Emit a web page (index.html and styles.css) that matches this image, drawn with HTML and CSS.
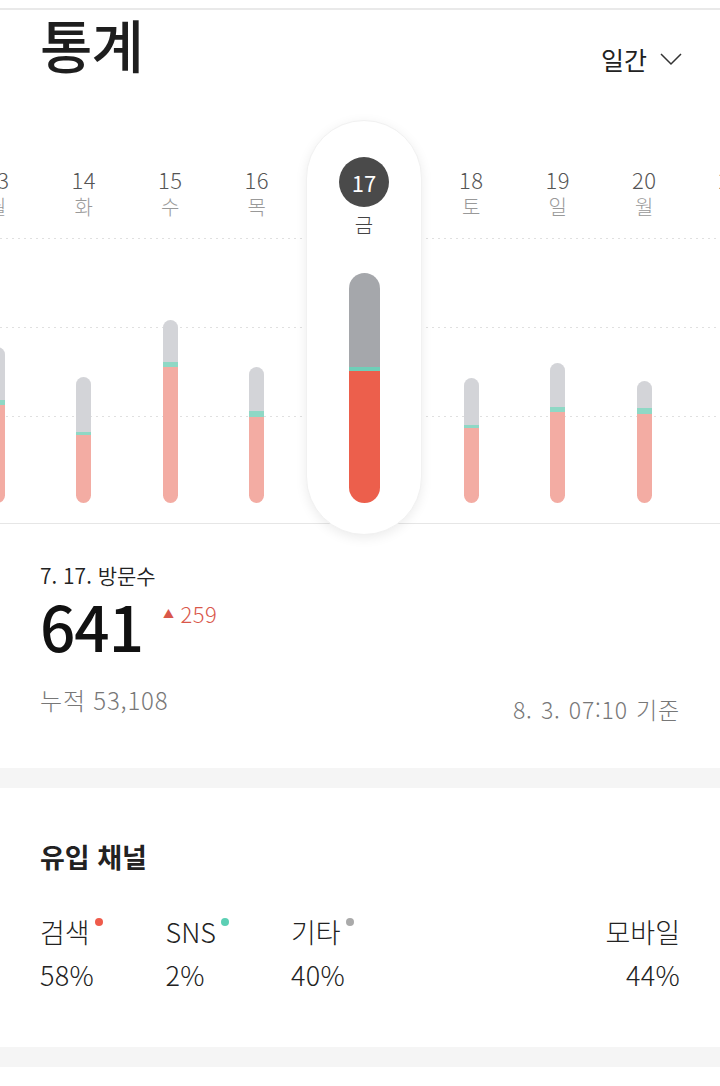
FILE: index.html
```html
<!DOCTYPE html>
<html lang="ko">
<head>
<meta charset="utf-8">
<title>통계</title>
<link rel="stylesheet" href="styles.css">
</head>
<body>
<div class="topline"></div>
<header class="head">
  <h1 class="title">통계</h1>
  <div class="period">일간
    <svg class="chev" width="22" height="14" viewBox="0 0 22 14"><polyline points="1,2 11,12 21,2" fill="none" stroke="#333" stroke-width="1.5"/></svg>
  </div>
</header>

<section class="chart">
  <div class="days">
    <div class="day">
      <div class="date">13</div><div class="dow">월</div>
      <div class="bar"><div class="g" style="height:53px"></div><div class="t" style="height:5px"></div><div class="p" style="height:98px"></div></div>
    </div>
    <div class="day">
      <div class="date">14</div><div class="dow">화</div>
      <div class="bar"><div class="g" style="height:55px"></div><div class="t" style="height:3px"></div><div class="p" style="height:68px"></div></div>
    </div>
    <div class="day">
      <div class="date">15</div><div class="dow">수</div>
      <div class="bar"><div class="g" style="height:42px"></div><div class="t" style="height:5px"></div><div class="p" style="height:136px"></div></div>
    </div>
    <div class="day">
      <div class="date">16</div><div class="dow">목</div>
      <div class="bar"><div class="g" style="height:44px"></div><div class="t" style="height:6px"></div><div class="p" style="height:86px"></div></div>
    </div>
    <div class="day day-sel">
      <div class="card">
        <div class="circle">17</div>
        <div class="dow dow-sel">금</div>
        <div class="bar bar-sel"><div class="g" style="height:94px"></div><div class="t" style="height:4px"></div><div class="p" style="height:132px"></div></div>
      </div>
    </div>
    <div class="day">
      <div class="date">18</div><div class="dow">토</div>
      <div class="bar"><div class="g" style="height:47px"></div><div class="t" style="height:3px"></div><div class="p" style="height:75px"></div></div>
    </div>
    <div class="day">
      <div class="date">19</div><div class="dow">일</div>
      <div class="bar"><div class="g" style="height:44px"></div><div class="t" style="height:5px"></div><div class="p" style="height:91px"></div></div>
    </div>
    <div class="day">
      <div class="date">20</div><div class="dow">월</div>
      <div class="bar"><div class="g" style="height:27px"></div><div class="t" style="height:6px"></div><div class="p" style="height:89px"></div></div>
    </div>
    <div class="day">
      <div class="date">21</div><div class="dow">화</div>
      <div class="bar"><div class="g" style="height:40px"></div><div class="t" style="height:4px"></div><div class="p" style="height:80px"></div></div>
    </div>
  </div>
</section>

<section class="summary">
  <div class="sum-label">7. 17. 방문수</div>
  <div class="sum-main">
    <span class="big">641</span>
    <span class="delta"><span class="tri">▲</span>259</span>
  </div>
  <div class="sum-foot">
    <span class="total">누적 53,108</span>
    <span class="stamp">8. 3. 07:10 기준</span>
  </div>
</section>

<div class="band"></div>

<section class="channels">
  <h2 class="ch-title">유입 채널</h2>
  <div class="ch-row">
    <div class="ch-item">
      <div class="ch-name">검색<span class="dot dot-red"></span></div>
      <div class="ch-val">58%</div>
    </div>
    <div class="ch-item">
      <div class="ch-name">SNS<span class="dot dot-teal"></span></div>
      <div class="ch-val">2%</div>
    </div>
    <div class="ch-item">
      <div class="ch-name">기타<span class="dot dot-gray"></span></div>
      <div class="ch-val">40%</div>
    </div>
    <div class="ch-item ch-right">
      <div class="ch-name">모바일</div>
      <div class="ch-val">44%</div>
    </div>
  </div>
</section>

<div class="band"></div>
</body>
</html>
```

FILE: styles.css
```css
* { box-sizing: border-box; }
html, body { margin: 0; padding: 0; background: #fff; }
body {
  font-family: "Noto Sans CJK KR", "Noto Sans", sans-serif;
  color: #222;
  width: 720px;
  overflow: hidden;
}

.topline {
  margin-top: 8px;
  height: 2px;
  background: #e9e9e9;
}

.head {
  height: 108px;
  padding: 9px 38px 0 40px;
  display: flex;
  justify-content: space-between;
  align-items: flex-start;
}
.title {
  margin: 0;
  font-size: 57px;
  line-height: 48px;
  font-weight: 500;
  color: #1e1e1e;
  letter-spacing: -1px;
}
.period {
  margin-top: 25px;
  display: flex;
  align-items: center;
  font-size: 25px;
  line-height: 30px;
  color: #222;
  font-weight: 400;
}
.chev { margin-left: 13px; }

/* chart */
.chart {
  height: 406px;
  border-bottom: 1px solid #e6e6e6;
  background-image:
    repeating-linear-gradient(90deg, #e0e0e0 0 2px, transparent 2px 6px),
    repeating-linear-gradient(90deg, #e0e0e0 0 2px, transparent 2px 6px),
    repeating-linear-gradient(90deg, #e0e0e0 0 2px, transparent 2px 6px);
  background-size: 100% 1px;
  background-repeat: no-repeat;
  background-position: 0 120px, 0 209px, 0 298px;
}
.days {
  display: flex;
  margin-left: -46px;
  height: 405px;
}
.day {
  flex: none;
  width: 86.5px;
  height: 405px;
  padding: 48px 0 20px;
  display: flex;
  flex-direction: column;
  align-items: center;
}
.date {
  font-size: 22px;
  line-height: 26px;
  color: #555;
  font-weight: 300;
  letter-spacing: 0.5px;
}
.dow {
  margin-top: 3px;
  font-size: 20px;
  line-height: 24px;
  color: #999;
  font-weight: 300;
}
.bar {
  flex: none;
  margin-top: auto;
  width: 15px;
  border-radius: 7.5px;
  overflow: hidden;
  display: flex;
  flex-direction: column;
}
.bar .g { background: #d3d4d8; }
.bar .t { background: #8fd8c5; }
.bar .p { background: #f3aca3; }

.day-sel {
  width: 128px;
  padding: 2px 0 0;
}
.card {
  flex: none;
  width: 116px;
  height: 415px;
  border-radius: 58px;
  background: #fff;
  border: 1px solid #f1f1f1;
  box-shadow: 0 3px 12px rgba(0, 0, 0, 0.08);
  padding: 36px 0 31px;
  display: flex;
  flex-direction: column;
  align-items: center;
  position: relative;
}
.circle {
  flex: none;
  width: 50px;
  height: 50px;
  border-radius: 50%;
  background: #4a4a4a;
  color: #fff;
  font-size: 22px;
  line-height: 50px;
  text-align: center;
  font-weight: 400;
}
.dow-sel {
  margin-top: 6px;
  color: #444;
}
.bar-sel {
  width: 31px;
  border-radius: 15.5px;
}
.bar-sel .g { background: #a5a7ab; }
.bar-sel .t { background: #6fcfb8; }
.bar-sel .p { background: #ec5f4c; }

/* summary */
.summary {
  height: 244px;
  padding: 38px 40px 0;
}
.sum-label {
  font-size: 21px;
  line-height: 26px;
  color: #222;
  font-weight: 350;
}
.sum-main {
  margin-top: 5px;
  display: flex;
  align-items: flex-start;
}
.big {
  font-size: 62px;
  line-height: 64px;
  font-weight: 500;
  color: #111;
  letter-spacing: -1px;
}
.delta {
  margin-top: 7px;
  margin-left: 20px;
  font-size: 22px;
  line-height: 26px;
  color: #d9574a;
  font-weight: 300;
  letter-spacing: 0.5px;
}
.tri {
  font-size: 11px;
  vertical-align: 5px;
  margin-right: 6px;
}
.sum-foot {
  margin-top: 29px;
  display: flex;
  justify-content: space-between;
  align-items: flex-start;
  color: #777;
  font-weight: 300;
}
.total {
  font-size: 24px;
  line-height: 28px;
  letter-spacing: 0.8px;
}
.stamp {
  margin-top: 10px;
  font-size: 23px;
  line-height: 26px;
  letter-spacing: 0.8px;
  word-spacing: 1px;
}

.band {
  height: 20px;
  background: #f5f5f5;
}

/* channels */
.channels {
  height: 259px;
  padding: 53px 40px 0;
}
.ch-title {
  margin: 0;
  font-size: 27px;
  line-height: 32px;
  font-weight: 700;
  color: #222;
}
.ch-row {
  margin-top: 43px;
  display: flex;
}
.ch-item { width: 125.5px; }
.ch-right { margin-left: auto; text-align: right; width: auto; }
.ch-name {
  font-size: 27px;
  line-height: 32px;
  color: #222;
  font-weight: 300;
}
.ch-val {
  margin-top: 11px;
  font-size: 27px;
  line-height: 32px;
  color: #222;
  font-weight: 300;
  letter-spacing: 0.3px;
}
.dot {
  display: inline-block;
  width: 8px;
  height: 8px;
  border-radius: 50%;
  margin-left: 5px;
  vertical-align: top;
  margin-top: 2px;
}
.dot-red { background: #ef5b4b; }
.dot-teal { background: #5ccfb4; }
.dot-gray { background: #aaa; }
```
